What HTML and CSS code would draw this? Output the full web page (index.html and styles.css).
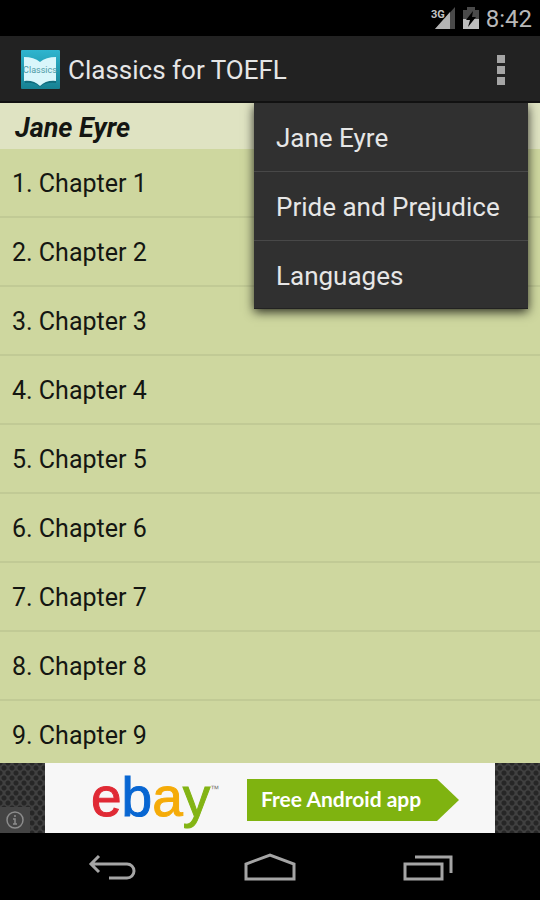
FILE: index.html
```html
<!DOCTYPE html>
<html lang="en">
<head>
  <meta charset="UTF-8">
  <meta name="viewport" content="width=device-width, initial-scale=1">
  <title>Classics for TOEFL</title>
  <link rel="stylesheet" href="styles.css">
</head>
<body>
  <!-- Status bar -->
  <div class="status-bar">
    <svg class="signal" width="26" height="24" viewBox="0 0 26 24" aria-label="3G signal">
      <path d="M25 1v22H5z" fill="#4a4a4a"/>
      <path d="M20 6v17H5z" fill="#b4b4b4"/>
      <text x="1" y="12" class="signal-text">3G</text>
    </svg>
    <svg class="battery" width="16" height="22" viewBox="0 0 16 22" aria-label="Battery charging">
      <path d="M4 0h8v3h4v19H0V3h4z" fill="#4a4a4a"/>
      <path d="M0 12h16v10H0z" fill="#bdbdbd"/>
      <path d="M10 4L3 13h4l-2 7 8-10H9z" fill="#000"/>
    </svg>
    <span class="clock">8:42</span>
  </div>

  <header class="action-bar">
    <svg class="app-icon" width="39" height="39" viewBox="0 0 39 39" aria-hidden="true">
      <defs>
        <linearGradient id="cover" x1="0" y1="0" x2="0" y2="1">
          <stop offset="0" stop-color="#2fb5cf"/>
          <stop offset="1" stop-color="#178193"/>
        </linearGradient>
      </defs>
      <rect width="39" height="39" rx="1" fill="url(#cover)"/>
      <path d="M4 12v21q10-1 15 4 5-5 16-4V12z" fill="#116d7e"/>
      <path d="M3 7q10 0 16 5 6-5 16-5v24q-10-1-16 5-6-6-16-5z" fill="#d9f6fb"/>
      <text x="19" y="23" class="cover-text">Classics</text>
    </svg>
    <h1>Classics for TOEFL</h1>
    <button class="overflow" type="button" aria-label="More options" aria-expanded="true">
      <span></span><span></span><span></span>
    </button>

    <!-- Overflow menu -->
    <div class="menu">
      <button type="button">Jane Eyre</button>
      <button type="button">Pride and Prejudice</button>
      <button type="button">Languages</button>
    </div>
  </header>

  <main>
    <h2>Jane Eyre</h2>
    <ul class="chapters">
      <li><a href="#1">1. Chapter 1</a></li>
      <li><a href="#2">2. Chapter 2</a></li>
      <li><a href="#3">3. Chapter 3</a></li>
      <li><a href="#4">4. Chapter 4</a></li>
      <li><a href="#5">5. Chapter 5</a></li>
      <li><a href="#6">6. Chapter 6</a></li>
      <li><a href="#7">7. Chapter 7</a></li>
      <li><a href="#8">8. Chapter 8</a></li>
      <li><a href="#9">9. Chapter 9</a></li>
    </ul>
  </main>

  <!-- Ad banner -->
  <aside class="ad">
    <button class="ad-info" type="button" aria-label="About this ad">
      <svg width="18" height="18" viewBox="0 0 18 18">
        <circle cx="9" cy="9" r="8" fill="none" stroke="#8c8c8c" stroke-width="1.5"/>
        <path d="M9 4v2M7 8h2v5M7 13h4" fill="none" stroke="#8c8c8c" stroke-width="1.5"/>
      </svg>
    </button>
    <a class="ad-link" href="#ad">
      <span class="ebay"><span class="e">e</span><span class="b">b</span><span class="a">a</span><span class="y">y</span><span class="tm">™</span></span>
      <span class="ad-action">Free Android app</span>
    </a>
  </aside>

  <nav class="nav-bar">
    <button type="button" aria-label="Back">
      <svg width="50" height="30" viewBox="0 0 50 30">
        <path d="M12 3L4 11l8 8M4 11h36a7 7 0 0 1 0 14H22" fill="none" stroke="#a5a5a5" stroke-width="3"/>
      </svg>
    </button>
    <button type="button" aria-label="Home">
      <svg width="52" height="30" viewBox="0 0 52 30">
        <path d="M2 26V11L26 2l24 9v15z" fill="none" stroke="#a5a5a5" stroke-width="3"/>
      </svg>
    </button>
    <button type="button" aria-label="Recent apps">
      <svg width="50" height="30" viewBox="0 0 50 30">
        <path d="M2 11h37v15H2zM12 4h36v16" fill="none" stroke="#a5a5a5" stroke-width="3"/>
      </svg>
    </button>
  </nav>
</body>
</html>
```
FILE: styles.css
```css
* {box-sizing:border-box;}
body {font-family:Roboto,sans-serif; margin:0; height:100vh; display:flex; flex-direction:column; background:#000; color:#e6e6e6; font-size:26px; line-height:32px;}
button {font:inherit; color:inherit; background:none; border:0; margin:0; padding:0; cursor:pointer;}
a {color:inherit; text-decoration:none;}
h1, h2, ul {margin:0; padding:0; font-weight:400; font-size:26px;}

/* Status bar */
.status-bar {flex:none; height:36px; display:flex; align-items:center; justify-content:flex-end; gap:7px; padding:0 8px;}
.signal-text {font-size:11px; font-weight:700; fill:#c4c4c4; stroke:#000; stroke-width:2px; paint-order:stroke;}
.clock {font-size:24px; line-height:36px; padding-top:2px; color:#b8b8b8;}

/* Action bar */
.action-bar {flex:none; position:relative; z-index:1; height:67px; display:flex; align-items:center; gap:8px; padding:0 11px 0 21px; background:#222; box-shadow:inset 0 -2px #111;}
.action-bar h1 {flex:1;}
.cover-text {font-size:9px; fill:#4e9aa6; text-anchor:middle;}
.overflow {width:56px; height:48px; display:flex; flex-direction:column; align-items:center; justify-content:center; gap:3px;}
.overflow span {width:8px; height:8px; background:#a5a5a5;}
.menu {position:absolute; top:100%; right:12px; width:274px; background:#303030; box-shadow:0 3px 10px rgba(0,0,0,0.8); clip-path:inset(0 -20px -20px -20px);}
.menu button {display:block; width:100%; height:69px; padding:2px 22px 0; text-align:left; white-space:nowrap; border-bottom:1px solid #484848;}
.menu button:last-child {height:68px; border-bottom-color:#222;}

/* Chapter list */
main {flex:1; min-height:0; overflow:hidden; background:#ced79f; color:#141612;}
h2 {padding:9px 15px 5px; background:#dfe3c2; font-size:27px; font-weight:700; font-style:italic;}
.chapters {list-style:none;}
.chapters a {display:flex; align-items:center; height:69px; padding:2px 12px 0; font-size:25px; border-bottom:2px solid #c1ca95;}

/* Ad banner */
.ad {flex:none; position:relative; height:70px; display:flex; justify-content:center; background-color:#404040; background-image:radial-gradient(circle,#262626 2px,transparent 3px),radial-gradient(circle,#262626 2px,transparent 3px); background-size:8px 10px; background-position:0 0,4px 5px;}
.ad-info {position:absolute; left:0; bottom:0; width:30px; height:26px; display:flex; align-items:center; justify-content:center; background:#444;}
.ad-link {width:450px; max-width:100%; display:flex; align-items:center; justify-content:space-between; padding:4px 36px 0 46px; background:#f7f7f7;}
.ebay {display:flex; height:66px; font-family:"Liberation Sans",sans-serif; font-size:55px; line-height:60px; -webkit-text-stroke:1px;}
.ebay .e {color:#e02a35;}
.ebay .b {color:#0866d2;}
.ebay .a {color:#f5ab08;}
.ebay .y {color:#83b414;}
.ebay .tm {font-size:9px; line-height:44px; color:#777; -webkit-text-stroke:0;}
.ad-action {width:212px; height:42px; padding-left:14px; background:#7fb310; color:#fff; font-family:Lato,sans-serif; font-weight:700; font-size:21px; line-height:40px; white-space:nowrap; clip-path:polygon(0 0,190px 0,100% 50%,190px 100%,0 100%);}

/* Navigation bar */
.nav-bar {flex:none; height:67px; display:flex; justify-content:center; gap:56px; padding-top:3px;}
.nav-bar button {width:102px; display:flex; align-items:center; justify-content:center;}
```
